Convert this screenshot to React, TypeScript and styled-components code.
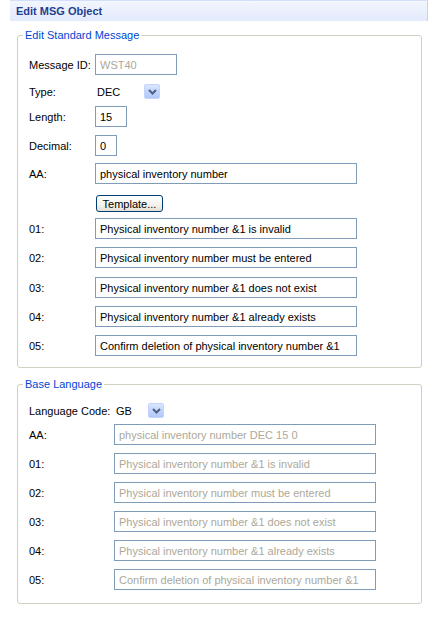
import React from "react";
import styled, { createGlobalStyle } from "styled-components";

const GlobalStyle = createGlobalStyle`
  html, body {
    margin: 0;
    padding: 0;
    background: #ffffff;
  }
  body {
    font-family: "Liberation Sans", Arial, sans-serif;
    font-size: 11px;
    color: #000000;
  }
`;

const Page = styled.div`
  width: 439px;
  height: 636px;
  background: #ffffff;
  padding-left: 10px;
  box-sizing: border-box;
`;

const Form = styled.div`
  width: 418px;
`;

const Header = styled.div`
  height: 21px;
  box-sizing: border-box;
  display: flex;
  align-items: center;
  padding-left: 6px;
  background: linear-gradient(to bottom, #f3f6fe 0%, #e2eafc 100%);
  border-top: 1px solid #d4e0fa;
  border-right: 1px solid #c3d3f6;
  font-weight: bold;
  font-size: 11px;
  color: #1f3f8f;
`;

const Body = styled.div`
  padding: 8px 6px 0 7px;
  display: flex;
  flex-direction: column;
  gap: 10px;
`;

const Group = styled.fieldset<{ $pb: number }>`
  margin: 0;
  border: 1px solid #d0d0bf;
  border-radius: 3px;
  padding: 0 11px ${(p) => p.$pb}px 11px;
  min-width: 0;
`;

const Legend = styled.legend`
  margin-left: -6px;
  padding: 0 2px;
  color: #0046d5;
  font-size: 11px;
  line-height: 13px;
`;

const Row = styled.div<{ $mt: number; $h?: number; $labelWidth: number }>`
  display: grid;
  grid-template-columns: ${(p) => p.$labelWidth}px auto;
  align-items: center;
  justify-items: start;
  margin-top: ${(p) => p.$mt}px;
  height: ${(p) => p.$h ?? 21}px;
`;

const Label = styled.span`
  white-space: nowrap;
`;

const TextBox = styled.div<{ $w: number; $disabled?: boolean }>`
  width: ${(p) => p.$w}px;
  height: 21px;
  box-sizing: border-box;
  border: 1px solid #7f9db9;
  background: #ffffff;
  padding: 0 4px;
  display: flex;
  align-items: center;
  white-space: nowrap;
  overflow: hidden;
  color: ${(p) => (p.$disabled ? "#aca899" : "#000000")};
`;

const Combo = styled.div<{ $w: number }>`
  width: ${(p) => p.$w}px;
  display: flex;
  align-items: center;
  justify-content: space-between;
  padding-left: 2px;
  box-sizing: border-box;
`;

const ComboButton = styled.div`
  width: 16px;
  height: 15px;
  box-sizing: border-box;
  border: 1px solid #c3d3fd;
  border-radius: 2px;
  background: linear-gradient(to bottom, #dce6fe 0%, #c4d5fc 50%, #b2c8fa 100%);
  display: flex;
  align-items: center;
  justify-content: center;
`;

const Button = styled.button`
  margin-left: 1px;
  width: 67px;
  height: 17px;
  box-sizing: border-box;
  border: 1px solid #003c74;
  border-radius: 3px;
  background: linear-gradient(to bottom, #ffffff 0%, #f3f2ec 60%, #e3e0d2 100%);
  font-family: "Liberation Sans", Arial, sans-serif;
  font-size: 11px;
  color: #000000;
  padding: 0;
  display: flex;
  align-items: center;
  justify-content: center;
`;

const Chevron = () => (
  <svg width="9" height="6" viewBox="0 0 9 6">
    <path d="M1 1 L4.5 4.5 L8 1" fill="none" stroke="#4d6185" strokeWidth="2" />
  </svg>
);

const messages = [
  { id: "01", text: "Physical inventory number &1 is invalid" },
  { id: "02", text: "Physical inventory number must be entered" },
  { id: "03", text: "Physical inventory number &1 does not exist" },
  { id: "04", text: "Physical inventory number &1 already exists" },
  { id: "05", text: "Confirm deletion of physical inventory number &1" },
];

const standardGaps = [7, 8, 9, 8, 8];

export default function App() {
  return (
    <Page>
      <GlobalStyle />
      <Form>
        <Header>Edit MSG Object</Header>
        <Body>
          <Group $pb={11}>
            <Legend>Edit Standard Message</Legend>
            <Row $mt={12} $labelWidth={66}>
              <Label>Message ID:</Label>
              <TextBox $w={82} $disabled>
                WST40
              </TextBox>
            </Row>
            <Row $mt={6} $labelWidth={66}>
              <Label>Type:</Label>
              <Combo $w={65}>
                <span>DEC</span>
                <ComboButton>
                  <Chevron />
                </ComboButton>
              </Combo>
            </Row>
            <Row $mt={4} $labelWidth={66}>
              <Label>Length:</Label>
              <TextBox $w={32}>15</TextBox>
            </Row>
            <Row $mt={8} $labelWidth={66}>
              <Label>Decimal:</Label>
              <TextBox $w={22}>0</TextBox>
            </Row>
            <Row $mt={7} $labelWidth={66}>
              <Label>AA:</Label>
              <TextBox $w={262}>physical inventory number</TextBox>
            </Row>
            <Row $mt={11} $h={16} $labelWidth={66}>
              <span />
              <Button>Template...</Button>
            </Row>
            {messages.map((m, i) => (
              <Row key={m.id} $mt={standardGaps[i]} $labelWidth={66}>
                <Label>{m.id}:</Label>
                <TextBox $w={262}>{m.text}</TextBox>
              </Row>
            ))}
          </Group>

          <Group $pb={13}>
            <Legend>Base Language</Legend>
            <Row $mt={9} $labelWidth={85}>
              <Label>Language Code:</Label>
              <Combo $w={50}>
                <span>GB</span>
                <ComboButton>
                  <Chevron />
                </ComboButton>
              </Combo>
            </Row>
            <Row $mt={3} $labelWidth={85}>
              <Label>AA:</Label>
              <TextBox $w={262} $disabled>
                physical inventory number DEC 15 0
              </TextBox>
            </Row>
            {messages.map((m) => (
              <Row key={m.id} $mt={8} $labelWidth={85}>
                <Label>{m.id}:</Label>
                <TextBox $w={262} $disabled>
                  {m.text}
                </TextBox>
              </Row>
            ))}
          </Group>
        </Body>
      </Form>
    </Page>
  );
}
